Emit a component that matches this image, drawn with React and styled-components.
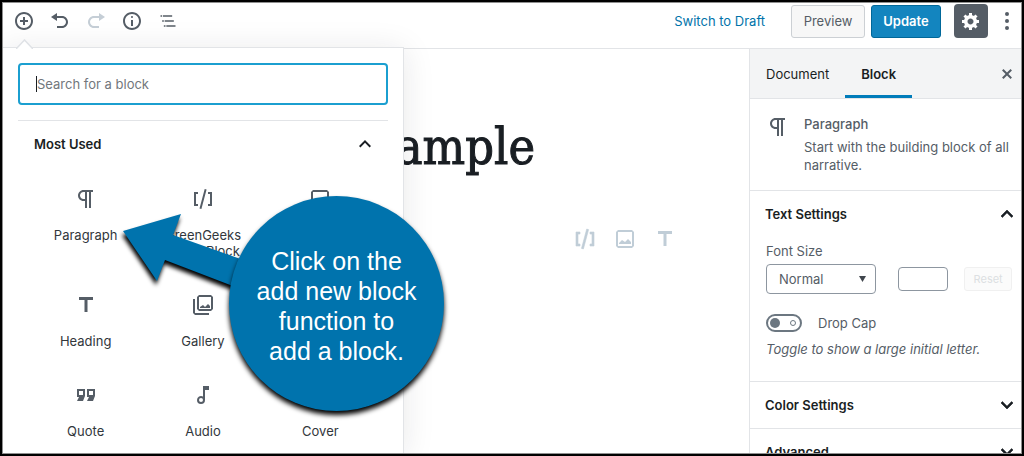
import React from "react";
import styled, { createGlobalStyle } from "styled-components";

const Global = createGlobalStyle`
  *, *::before, *::after { box-sizing: border-box; }
  body {
    margin: 0;
    background: #fff;
    color: #191e23;
    font: 13px/18px Inter, "Liberation Sans", sans-serif;
  }
  button, input, select { font: inherit; color: inherit; }
  button { border: 0; padding: 0; background: none; cursor: pointer; }
  h1, h2, h3, p, ul { margin: 0; padding: 0; }
`;

const ICONS = {
  insert: [20, "M10 1c-5 0-9 4-9 9s4 9 9 9 9-4 9-9-4-9-9-9zm0 16c-3.9 0-7-3.1-7-7s3.1-7 7-7 7 3.1 7 7-3.1 7-7 7zm1-11H9v3H6v2h3v3h2v-3h3V9h-3V6z"],
  undo: [20, "M12 5H7V2L1 6l6 4V7h5c2.2 0 4 1.8 4 4s-1.8 4-4 4H7v2h5c3.3 0 6-2.7 6-6s-2.7-6-6-6z"],
  redo: [20, "M8 5h5V2l6 4-6 4V7H8c-2.2 0-4 1.8-4 4s1.8 4 4 4h5v2H8c-3.3 0-6-2.7-6-6s2.7-6 6-6z"],
  info: [20, "M9 15h2V9H9v6zm1-10c-.5 0-1 .5-1 1s.5 1 1 1 1-.5 1-1-.5-1-1-1zm0-4c-5 0-9 4-9 9s4 9 9 9 9-4 9-9-4-9-9-9zm0 16c-3.9 0-7-3.1-7-7s3.1-7 7-7 7 3.1 7 7-3.1 7-7 7z"],
  outline: [24, "M5 5H3v2h2V5zm3 8h11v-2H8v2zm9-8H6v2h11V5zM7 11H5v2h2v-2zm0 8h2v-2H7v2zm3-2v2h11v-2H10z"],
  gear: [20, "M18 12h-2.18c-.17.7-.44 1.35-.81 1.93l1.54 1.54-2.1 2.1-1.54-1.54c-.58.36-1.23.63-1.91.79V19H8v-2.18c-.68-.16-1.33-.43-1.91-.79l-1.54 1.54-2.12-2.12 1.54-1.54c-.36-.58-.63-1.23-.79-1.91H1V9.03h2.17c.16-.7.44-1.35.8-1.94L2.43 5.55l2.1-2.1 1.54 1.54c.58-.37 1.24-.64 1.93-.81V2h3v2.18c.68.16 1.33.43 1.91.79l1.54-1.54 2.12 2.12-1.54 1.54c.36.59.64 1.24.8 1.94H18V12zm-8.5 1.5c1.66 0 3-1.34 3-3s-1.34-3-3-3-3 1.34-3 3 1.34 3 3 3z"],
  more: [20, "M10 1a2 2 0 1 0 0 4 2 2 0 0 0 0-4zm0 7a2 2 0 1 0 0 4 2 2 0 0 0 0-4zm0 7a2 2 0 1 0 0 4 2 2 0 0 0 0-4z"],
  close: [20, "M14.95 6.46L11.41 10l3.54 3.54-1.41 1.41L10 11.42l-3.53 3.53-1.42-1.42L8.58 10 5.05 6.47l1.42-1.42L10 8.58l3.54-3.53z"],
  paragraph: [24, "M11 5v7H9.5C7.6 12 6 10.4 6 8.5S7.6 5 9.5 5H11m8-2H9.5C6.5 3 4 5.5 4 8.5S6.5 14 9.5 14H11v7h2V5h2v16h2V5h2V3z"],
  shortcode: [24, "M8.5 21.4l1.9.5 5.2-19.3-1.9-.5-5.2 19.3zM3 19h4v-2H5V7h2V5H3v14zM17 5v2h2v10h-2v2h4V5h-4z"],
  image: [24, "M19 3H5L3 5v14l2 2h14l2-2V5l-2-2zm0 16H5V5h14v14zM6 17h12v-2l-3-3-3 3-3-2-3 3z"],
  heading: [24, "M5 4v3h5.5v12h3V7H19V4z"],
  gallery: [24, "M20 4v12H8V4h12m0-2H8L6 4v12l2 2h12l2-2V4l-2-2zM9 15h10v-2l-2-2-3 3-2-2-3 2zM2 6v14l2 2h14v-2H4V6H2z"],
  list: [24, "M9 19h12v-2H9v2zm0-6h12v-2H9v2zm0-8v2h12V5H9zM3 5h3v2H3V5zm0 6h3v2H3v-2zm0 6h3v2H3v-2z"],
  quote: [24, "M19 18h-6l2-4h-2V6h8v7l-2 5zm0-6V8h-4v4h4zM9 18H3l2-4H3V6h8v7l-2 5zm0-6V8H5v4h4z"],
  audio: [24, "M12 3v10.55A4 4 0 0 0 6 17a4 4 0 0 0 8 0V7h4V3h-6zm-2 16a2 2 0 1 1 0-4 2 2 0 0 1 0 4z"],
  up: [24, "M12 8l-6 6 1.41 1.41L12 10.83l4.59 4.58L18 14z"],
  down: [24, "M7.41 8.59L12 13.17l4.59-4.58L18 10l-6 6-6-6z"],
};

const Glyph = styled.svg`
  display: block;
  flex: none;
  fill: currentColor;
  stroke: ${(p) => (p.$bold ? "currentColor" : "none")};
  stroke-width: 0.6;
`;

function Icon({ name, size, bold }) {
  const [box, d] = ICONS[name];
  const px = size || box;
  return (
    <Glyph $bold={bold} width={px} height={px} viewBox={`0 0 ${box} ${box}`} aria-hidden="true">
      <path d={d} />
    </Glyph>
  );
}

const Frame = styled.div`
  height: 100vh;
  border: 2px solid #000;
`;

const Editor = styled.div`
  position: relative;
  display: flex;
  flex-direction: column;
  height: 100%;
  overflow: hidden;
  border: 1px solid #8f8f8f;
  background: #fff;
`;

const Header = styled.header`
  display: flex;
  flex: none;
  align-items: center;
  justify-content: space-between;
  padding: 1px 2px 10px 3px;
  border-bottom: 1px solid #e2e4e7;
`;

const Tools = styled.div`
  display: flex;
  align-items: center;
`;

const ToolButton = styled.button`
  display: flex;
  align-items: center;
  justify-content: center;
  width: 36px;
  height: 34px;
  color: #555d66;
  &:disabled { color: #c5ced6; }
`;

const Actions = styled.div`
  display: flex;
  align-items: center;
`;

const DraftLink = styled.a`
  margin-right: 26px;
  color: #0073aa;
  text-decoration: none;
`;

const ActionButton = styled.button`
  height: 33px;
  width: ${(p) => (p.$primary ? 70 : 74)}px;
  border: 1px solid ${(p) => (p.$primary ? "#006799" : "#ccd0d4")};
  border-radius: 3px;
  background: ${(p) => (p.$primary ? "#1385bf" : "#f7f7f7")};
  color: ${(p) => (p.$primary ? "#fff" : "#555d66")};
  font-weight: ${(p) => (p.$primary ? 600 : 400)};
  margin-right: ${(p) => (p.$primary ? 13 : 6)}px;
`;

const SettingsButton = styled.button`
  display: flex;
  align-items: center;
  justify-content: center;
  width: 34px;
  height: 34px;
  margin-right: 7px;
  border-radius: 4px;
  background: #555d66;
  color: #fff;
`;

const MoreButton = styled.button`
  display: flex;
  justify-content: center;
  width: 24px;
  color: #555d66;
`;

const Body = styled.div`
  display: flex;
  flex: 1;
  min-height: 0;
`;

const Canvas = styled.main`
  flex: 1;
  padding: 66px 72px 0 0;
`;

const Title = styled.h1`
  margin-right: 142px;
  font: 400 50px/64px "DejaVu Serif Condensed", "DejaVu Serif", serif;
  -webkit-text-stroke: 1px #191e23;
  text-align: right;
`;

const Shortcuts = styled.div`
  display: flex;
  justify-content: flex-end;
  gap: 16px;
  margin-top: 48px;
`;

const ShortcutButton = styled.button`
  color: #c0cdd7;
`;

const Sidebar = styled.aside`
  flex: none;
  width: 272px;
  overflow: hidden;
  border-left: 1px solid #e2e4e7;
`;

const Tabs = styled.div`
  display: flex;
  height: 50px;
  padding-right: 4px;
  border-bottom: 1px solid #e2e4e7;
  background: #f3f4f5;
`;

const Tab = styled.button`
  padding: 3px 16px 0;
  border-bottom: 3px solid ${(p) => (p.$active ? "#007cba" : "transparent")};
  font-weight: ${(p) => (p.$active ? 600 : 400)};
`;

const CloseButton = styled.button`
  margin-left: auto;
  color: #555d66;
`;

const Card = styled.section`
  display: flex;
  gap: 14px;
  padding: 16px 8px 16px 16px;
  border-bottom: 1px solid #e2e4e7;
  color: #555d66;
`;

const CardName = styled.h2`
  margin-bottom: 5px;
  font-size: 13px;
  font-weight: 500;
`;

const Panel = styled.section`
  border-bottom: 1px solid #e2e4e7;
`;

const PanelToggle = styled.button`
  display: flex;
  align-items: center;
  justify-content: space-between;
  width: 100%;
  height: 46px;
  padding: 0 2px 0 15px;
  font-weight: 600;
`;

const PanelBody = styled.div`
  padding: 5px 9px 23px 16px;
  color: #555d66;
`;

const FieldLabel = styled.label`
  display: block;
  margin-bottom: 4px;
`;

const SizeRow = styled.div`
  display: flex;
  align-items: center;
  margin-bottom: 20px;
`;

const SelectWrap = styled.div`
  display: flex;
  align-items: center;
  width: 110px;
`;

const Select = styled.select`
  width: 110px;
  height: 30px;
  padding: 0 12px;
  appearance: none;
  border: 1px solid #8d96a0;
  border-radius: 4px;
  background: #fff;
`;

const SelectArrow = styled.svg`
  flex: none;
  margin-left: -17px;
  fill: #40464d;
  pointer-events: none;
`;

const SizeInput = styled.input`
  width: 50px;
  height: 24px;
  margin: 0 16px 0 23px;
  border: 1px solid #8d96a0;
  border-radius: 4px;
`;

const ResetButton = styled.button`
  width: 48px;
  height: 24px;
  border: 1px solid #f0f0f0;
  border-radius: 3px;
  background: #fbfbfb;
  font-size: 11px;
  &:disabled { color: #dcdfe2; }
`;

const ToggleRow = styled.div`
  display: flex;
  align-items: center;
  gap: 16px;
  margin-bottom: 8px;
`;

const Switch = styled.input`
  display: flex;
  align-items: center;
  justify-content: space-between;
  width: 36px;
  height: 18px;
  margin: 0;
  padding: 0 4px 0 2px;
  appearance: none;
  border: 2px solid #6c7781;
  border-radius: 9px;
  &::before {
    content: "";
    width: 10px;
    height: 10px;
    border-radius: 50%;
    background: #6c7781;
  }
  &::after {
    content: "";
    width: 6px;
    height: 6px;
    border: 1px solid #6c7781;
    border-radius: 50%;
  }
`;

const Help = styled.p`
  font-style: italic;
  white-space: nowrap;
`;

const Inserter = styled.section`
  position: absolute;
  top: 44px;
  left: 0;
  bottom: 0;
  width: 401px;
  padding: 15px 15px 0;
  border: 1px solid #e2e4e7;
  border-width: 1px 1px 0 0;
  background: #fff;
  box-shadow: 0 3px 30px rgba(25, 30, 35, 0.1);
`;

const Pointer = styled.svg`
  position: absolute;
  top: -9px;
  left: 13px;
`;

const SearchBox = styled.div`
  display: flex;
  align-items: center;
  height: 42px;
  padding: 0 16px;
  border: 2px solid #1b9fd0;
  border-radius: 4px;
`;

const Caret = styled.span`
  width: 1px;
  height: 16px;
  background: #191e23;
`;

const SearchInput = styled.input`
  flex: 1;
  min-width: 0;
  padding: 0;
  border: 0;
  outline: 0;
  background: none;
  &::placeholder { color: #72777c; opacity: 1; }
`;

const GroupToggle = styled.button`
  display: flex;
  align-items: center;
  justify-content: space-between;
  width: 100%;
  height: 46px;
  margin-top: 15px;
  padding: 0 11px 0 16px;
  border-top: 1px solid #e2e4e7;
  font-weight: 600;
`;

const BlockGrid = styled.ul`
  display: grid;
  grid-template-columns: repeat(3, 1fr);
  padding: 21px 9px 0;
  list-style: none;
`;

const BlockButton = styled.button`
  display: flex;
  flex-direction: column;
  align-items: center;
  width: 100%;
  padding-bottom: 34px;
  color: #555d66;
`;

const BlockName = styled.span`
  margin-top: 16px;
  color: #32373c;
  line-height: 16px;
  white-space: pre-line;
`;

const Callout = styled.div`
  position: absolute;
  top: 193px;
  left: 226px;
  display: flex;
  align-items: center;
  justify-content: center;
  width: 215px;
  height: 215px;
  padding-top: 5px;
  border-radius: 50%;
  background: #0073ad;
  box-shadow: 0 4px 5px #000;
  color: #fff;
  font: 25px/30px "Liberation Sans", sans-serif;
  text-align: center;
  white-space: pre-line;
`;

const CalloutArrow = styled.svg`
  position: absolute;
  top: 207px;
  left: 116px;
  fill: #0073ad;
  filter: drop-shadow(-1px 4px 2px #000);
`;

const BLOCKS = [
  { icon: "paragraph", label: "Paragraph" },
  { icon: "shortcode", label: "GreenGeeks\nDemo Block" },
  { icon: "image", hint: "Image" },
  { icon: "heading", label: "Heading" },
  { icon: "gallery", label: "Gallery" },
  { icon: "list", hint: "List" },
  { icon: "quote", label: "Quote" },
  { icon: "audio", label: "Audio" },
  { icon: "image", label: "Cover" },
];

export default function App() {
  return (
    <Frame>
      <Global />
      <Editor>
        <Header>
          <Tools>
            <ToolButton aria-label="Add block"><Icon name="insert" /></ToolButton>
            <ToolButton aria-label="Undo"><Icon name="undo" /></ToolButton>
            <ToolButton aria-label="Redo" disabled><Icon name="redo" /></ToolButton>
            <ToolButton aria-label="Content structure"><Icon name="info" /></ToolButton>
            <ToolButton aria-label="Block navigation"><Icon name="outline" size={20} /></ToolButton>
          </Tools>
          <Actions>
            <DraftLink href="#draft">Switch to Draft</DraftLink>
            <ActionButton>Preview</ActionButton>
            <ActionButton $primary>Update</ActionButton>
            <SettingsButton aria-label="Settings"><Icon name="gear" /></SettingsButton>
            <MoreButton aria-label="More tools"><Icon name="more" /></MoreButton>
          </Actions>
        </Header>

        <Body>
          <Canvas>
            <Title>Example</Title>
            <Shortcuts>
              <ShortcutButton aria-label="Add shortcode"><Icon name="shortcode" bold /></ShortcutButton>
              <ShortcutButton aria-label="Add image"><Icon name="image" /></ShortcutButton>
              <ShortcutButton aria-label="Add heading"><Icon name="heading" /></ShortcutButton>
            </Shortcuts>
          </Canvas>

          <Sidebar>
            <Tabs>
              <Tab>Document</Tab>
              <Tab $active>Block</Tab>
              <CloseButton aria-label="Close settings"><Icon name="close" /></CloseButton>
            </Tabs>
            <Card>
              <Icon name="paragraph" />
              <div>
                <CardName>Paragraph</CardName>
                <p>Start with the building block of all narrative.</p>
              </div>
            </Card>
            <Panel>
              <PanelToggle aria-expanded="true">Text Settings<Icon name="up" bold /></PanelToggle>
              <PanelBody>
                <FieldLabel htmlFor="font-size">Font Size</FieldLabel>
                <SizeRow>
                  <SelectWrap>
                    <Select id="font-size"><option>Normal</option></Select>
                    <SelectArrow width="7" height="6" viewBox="0 0 7 6"><path d="M0 0h7L3.500 6z" /></SelectArrow>
                  </SelectWrap>
                  <SizeInput aria-label="Custom size" />
                  <ResetButton disabled>Reset</ResetButton>
                </SizeRow>
                <ToggleRow>
                  <Switch type="checkbox" id="drop-cap" />
                  <label htmlFor="drop-cap">Drop Cap</label>
                </ToggleRow>
                <Help>Toggle to show a large initial letter.</Help>
              </PanelBody>
            </Panel>
            <Panel>
              <PanelToggle>Color Settings<Icon name="down" bold /></PanelToggle>
            </Panel>
            <Panel>
              <PanelToggle>Advanced<Icon name="down" bold /></PanelToggle>
            </Panel>
          </Sidebar>
        </Body>

        <Inserter>
          <Pointer width="17" height="10" viewBox="0 0 17 10">
            <path d="M0 10L8.500 1 17 10" fill="#fff" stroke="#dfe2e6" strokeWidth="1.500" />
          </Pointer>
          <SearchBox>
            <Caret />
            <SearchInput aria-label="Search for a block" placeholder="Search for a block" />
          </SearchBox>
          <GroupToggle aria-expanded="true">Most Used<Icon name="up" /></GroupToggle>
          <BlockGrid>
            {BLOCKS.map(({ icon, label, hint }) => (
              <li key={label || hint}>
                <BlockButton aria-label={hint}>
                  <Icon name={icon} />
                  {label && <BlockName>{label}</BlockName>}
                </BlockButton>
              </li>
            ))}
          </BlockGrid>
        </Inserter>

        <CalloutArrow width="130" height="80" viewBox="119 210 130 80">
          <path d="M123 231L181 214 173 235 249 262 238 288 165 260 157 281z" />
        </CalloutArrow>
        <Callout>{"Click on the\nadd new block\nfunction to\nadd a block."}</Callout>
      </Editor>
    </Frame>
  );
}
